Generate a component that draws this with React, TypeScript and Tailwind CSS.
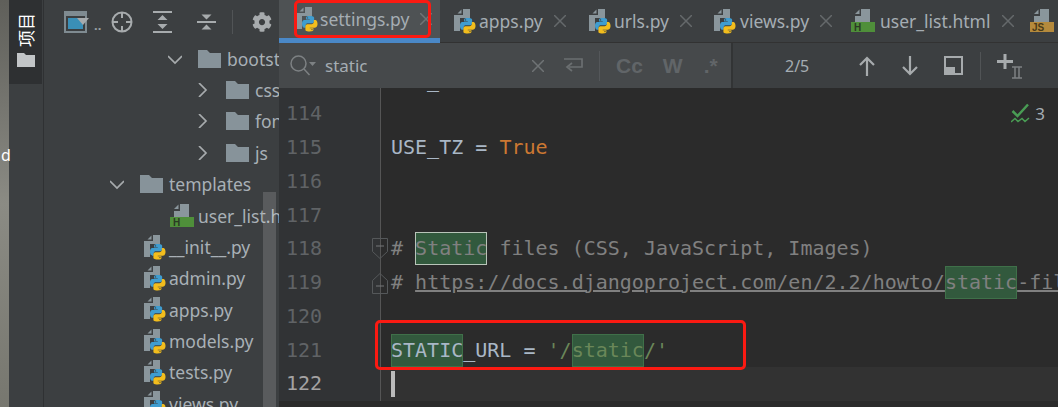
import { FaCog } from "react-icons/fa"

const ui = "font-['Noto_Sans','Open_Sans',sans-serif]"

const logoBlue = "M7.900 0C4 0 4.200 1.700 4.200 1.700v1.800H8V4H2.700S0 3.700 0 7.900 2.400 12 2.400 12h1.400v-2s-.1-2.400 2.400-2.400h4s2.300 0 2.300-2.200V1.900S12.900 0 7.900 0zM5.700 1.300a.7.7 0 110 1.400.7.7 0 010-1.400z"

function PyIcon() {
  return (
    <svg width="23" height="25" viewBox="0 0 23 25" className="shrink-0">
      <path d="M1 6h9V0h7v9H7v13H1z" fill="#8a969c" />
      <path d="M4.500 4.500L8.500.5v4z" fill="#8a969c" />
      <g transform="translate(7 9) scale(.97)">
        <path d={logoBlue} fill="#3f9dd0" />
        <path d={logoBlue} fill="#f2bd1d" transform="rotate(180 8 8)" />
      </g>
    </svg>
  )
}

function HtmlIcon() {
  return (
    <svg width="24" height="24" viewBox="0 0 24 24" className="shrink-0">
      <path d="M10 0h9v13H4V7h6z" fill="#8a969c" />
      <path d="M4 5L8.500.5V5z" fill="#8a969c" />
      <rect x="0" y="13" width="24" height="10" fill="#4f8f3a" />
      <text x="3" y="22" fontSize="10" fill="#2b3a24" fontWeight="700" fontFamily="Liberation Sans">H</text>
    </svg>
  )
}

function JsIcon() {
  return (
    <svg width="24" height="24" viewBox="0 0 24 24" className="shrink-0">
      <path d="M10 0h9v13H4V7h6z" fill="#8a969c" />
      <path d="M4 5L8.500.5V5z" fill="#8a969c" />
      <rect x="0" y="13" width="24" height="10" fill="#b58a3c" />
      <text x="2" y="22" fontSize="10" fill="#4a3a18" fontWeight="700" fontFamily="Liberation Sans">JS</text>
    </svg>
  )
}

function Folder() {
  return (
    <svg width="23" height="18" viewBox="0 0 23 18" className="shrink-0">
      <path d="M0 0h9l3 3h11v15H0z" fill="#87939a" />
    </svg>
  )
}

function Chevron({ open }: { open: boolean }) {
  return (
    <svg width="14" height="14" viewBox="0 0 14 14" className="shrink-0" fill="none" stroke="#a7abad" strokeWidth="1.700">
      {open ? <path d="M0 4l7 7 7-7" /> : <path d="M3 0l7 7-7 7" />}
    </svg>
  )
}

function Cross({ color = "#65696b" }: { color?: string }) {
  return (
    <svg width="12" height="12" viewBox="0 0 12 12" className="shrink-0" fill="none" stroke={color} strokeWidth="1.500">
      <path d="M0 0l12 12M12 0L0 12" />
    </svg>
  )
}

function Tab({ name, icon, width, active, gap }: { name: string; icon: React.ReactNode; width: string; active?: boolean; gap: string }) {
  return (
    <div className={`flex h-full shrink-0 items-center ${width} ${active ? "border-b-[5px] border-[#4a88c7] bg-[#4e5254] pl-[16px]" : "border-b border-[#323232] pl-[13px]"}`}>
      {icon}
      <span className={`text-[17.500px] text-[#a5adb3] ${gap} ${ui}`}>{name}</span>
      <span className="ml-[11px]"><Cross color={active ? "#707476" : "#65696b"} /></span>
    </div>
  )
}

function TreeRow({ pad, chev, icon, name, gap = "ml-[6px]" }: { pad: string; chev?: "open" | "closed"; icon: React.ReactNode; name: string; gap?: string }) {
  return (
    <div className={`flex h-[31.400px] shrink-0 items-center whitespace-nowrap ${pad}`}>
      {chev && <span className="mr-[16px]"><Chevron open={chev === "open"} /></span>}
      {icon}
      <span className={`text-[17.500px] text-[#a8b0b6] ${gap} ${ui}`}>{name}</span>
    </div>
  )
}

function FoldMark({ up }: { up?: boolean }) {
  return (
    <svg width="16" height="22" viewBox="0 0 16 22" className="absolute right-[-8px] top-[6px]" fill="none" stroke="#55585a" strokeWidth="1">
      {up ? <path d="M.5 21.500v-13l7.500-7 7.500 7v13z" /> : <path d="M.5.5v13l7.500 7 7.500-7V.5z" />}
      <path d={up ? "M4 14h8" : "M4 8h8"} stroke="#77797b" />
    </svg>
  )
}

function CodeLine({ no, current, fold, children }: { no: number; current?: boolean; fold?: "up" | "down"; children?: React.ReactNode }) {
  return (
    <div className={`flex h-[33.750px] ${current ? "bg-[#323232]" : ""}`}>
      <div className={`relative h-full w-[102px] shrink-0 border-r border-[#555] pl-[7px] leading-[33.750px] ${current ? "text-[#a4a3a3]" : "text-[#606366]"} bg-[#313335]`}>
        {no}
        {fold && <FoldMark up={fold === "up"} />}
      </div>
      <div className="whitespace-pre pl-[10px] leading-[33.750px] text-[#a9b7c6]">{children}</div>
    </div>
  )
}

function Hit({ children, boxed }: { children: React.ReactNode; boxed?: boolean }) {
  return (
    <span className={`inline-block h-[33px] leading-[33px] ${boxed ? "outline outline-1 -outline-offset-1 outline-[#b9c4b9]" : "outline outline-1 -outline-offset-1 outline-[#3f7049]"} bg-[#32593d]`}>
      {children}
    </span>
  )
}

export default function App() {
  return (
    <div className="relative flex h-[407px] w-[1058px] overflow-hidden bg-[#3c3f41]">
      {/* wallpaper sliver */}
      <div className="w-[9px] shrink-0 bg-gradient-to-b from-[#5f5f5a] via-[#8b8b84] to-[#77776f]" />

      {/* tool window strip */}
      <div className="flex w-[35px] shrink-0 flex-col border-r border-[#2f3133]">
        <div className="flex h-[84px] w-[33px] flex-col items-center bg-[#2e3032] pt-[13px]">
          <span className="rotate-180 text-[17px] leading-[18px] text-white [text-orientation:sideways] [writing-mode:vertical-rl] font-['Noto_Sans_CJK_SC',sans-serif]">项目</span>
          <svg width="18" height="14" viewBox="0 0 18 14" className="mt-[6px]">
            <path d="M0 0h7l2 2h9v12H0z" fill="#c2c5c7" />
          </svg>
        </div>
      </div>

      {/* project panel */}
      <div className="flex w-[235px] shrink-0 flex-col overflow-hidden">
        <div className="flex h-[43px] shrink-0 items-center pl-[20px]">
          <svg width="25" height="22" viewBox="0 0 25 22" className="shrink-0">
            <rect x="1" y="1" width="21" height="20" fill="none" stroke="#7f8b91" strokeWidth="2" />
            <rect x="1" y="1" width="21" height="4" fill="#7f8b91" />
            <rect x="4" y="7" width="15" height="11" fill="#3a8fb7" />
            <path d="M13 7h12l-6 7z" fill="#a7abad" />
          </svg>
          <span className="ml-[5px] mt-[8px] text-[13px] font-bold leading-none text-[#9aa0a3]">..</span>
          <svg width="22" height="22" viewBox="0 0 22 22" className="ml-[10px]" fill="none" stroke="#a7abad" strokeWidth="2">
            <circle cx="11" cy="11" r="9.500" />
            <path d="M11 1v6M11 15v6M1 11h6M15 11h6" />
          </svg>
          <svg width="20" height="22" viewBox="0 0 20 22" className="ml-[20px]" fill="#a7abad">
            <rect x="0" y="0" width="19" height="2" />
            <rect x="0" y="20" width="19" height="2" />
            <path d="M9.500 4l5 5h-10zM9.500 18l5-5h-10z" />
          </svg>
          <svg width="20" height="22" viewBox="0 0 20 22" className="ml-[24px]" fill="#a7abad">
            <rect x="0" y="10" width="19" height="2" />
            <path d="M9.500 8.500l5-5h-10zM9.500 13.500l5 5h-10z" />
          </svg>
          <div className="ml-[15px] h-[24px] w-px bg-[#515456]" />
          <FaCog className="ml-[19px] text-[20px] text-[#a7abad]" />
        </div>
        <TreeRow pad="pl-[124px]" chev="open" icon={<Folder />} name="bootstrap" />
        <TreeRow pad="pl-[152px]" chev="closed" icon={<Folder />} name="css" />
        <TreeRow pad="pl-[152px]" chev="closed" icon={<Folder />} name="fonts" />
        <TreeRow pad="pl-[152px]" chev="closed" icon={<Folder />} name="js" />
        <TreeRow pad="pl-[66px]" chev="open" icon={<Folder />} name="templates" />
        <TreeRow pad="pl-[126px]" icon={<HtmlIcon />} name="user_list.html" gap="ml-[4px]" />
        <TreeRow pad="pl-[99px]" icon={<PyIcon />} name="__init__.py" gap="ml-[3px]" />
        <TreeRow pad="pl-[99px]" icon={<PyIcon />} name="admin.py" gap="ml-[3px]" />
        <TreeRow pad="pl-[99px]" icon={<PyIcon />} name="apps.py" gap="ml-[3px]" />
        <TreeRow pad="pl-[99px]" icon={<PyIcon />} name="models.py" gap="ml-[3px]" />
        <TreeRow pad="pl-[99px]" icon={<PyIcon />} name="tests.py" gap="ml-[3px]" />
        <TreeRow pad="pl-[99px]" icon={<PyIcon />} name="views.py" gap="ml-[3px]" />
      </div>

      {/* editor side */}
      <div className="flex min-w-0 flex-1 flex-col overflow-hidden">
        <div className="flex h-[43px] shrink-0">
          <Tab name="settings.py" icon={<PyIcon />} width="w-[161px]" gap="ml-[2px]" active />
          <Tab name="apps.py" icon={<PyIcon />} width="w-[135px]" gap="ml-[3px]" />
          <Tab name="urls.py" icon={<PyIcon />} width="w-[125px]" gap="ml-[3px]" />
          <Tab name="views.py" icon={<PyIcon />} width="w-[138px]" gap="ml-[4px]" />
          <Tab name="user_list.html" icon={<HtmlIcon />} width="w-[179px]" gap="ml-[5px]" />
          <div className="flex h-full flex-1 items-center border-b border-[#323232] pl-[13px]"><JsIcon /></div>
        </div>

        {/* find bar */}
        <div className="flex h-[45px] shrink-0 items-center">
          <div className="flex h-full w-[454px] shrink-0 items-center border-r-2 border-[#323435] bg-[#46494b] pl-[11px]">
            <svg width="26" height="24" viewBox="0 0 26 24" fill="none" stroke="#7d8183" strokeWidth="1.500">
              <circle cx="8.500" cy="9.500" r="7.500" />
              <path d="M14 15l5.500 6" />
              <path d="M19 8h7l-3.500 4z" fill="#7d8183" stroke="none" />
            </svg>
            <span className={`ml-[9px] w-[207px] text-[17px] text-[#a5adb3] ${ui}`}>static</span>
            <Cross color="#6f7375" />
            <svg width="20" height="18" viewBox="0 0 20 18" className="ml-[20px]" fill="none" stroke="#6b6f71" strokeWidth="1.700">
              <path d="M0 2h18v8H5" />
              <path d="M8 6l-5 4 5 4" />
            </svg>
            <div className="ml-[15px] h-[30px] w-px bg-[#54575a]" />
            <span className="ml-[16px] text-[21px] font-bold text-[#616568] font-['Liberation_Sans',sans-serif]">Cc</span>
            <span className="ml-[20px] text-[21px] font-bold text-[#616568] font-['Liberation_Sans',sans-serif]">W</span>
            <span className="ml-[21px] text-[21px] font-bold text-[#616568] font-['Liberation_Sans',sans-serif]">.*</span>
          </div>
          <span className={`ml-[52px] w-[74px] text-[16px] text-[#a5adb3] ${ui}`}>2/5</span>
          <svg width="16" height="20" viewBox="0 0 16 20" fill="none" stroke="#a7abad" strokeWidth="2.200">
            <path d="M8 20V2M1 9l7-7 7 7" />
          </svg>
          <svg width="16" height="20" viewBox="0 0 16 20" className="ml-[27px]" fill="none" stroke="#a7abad" strokeWidth="2.200">
            <path d="M8 0v18M1 11l7 7 7-7" />
          </svg>
          <svg width="19" height="19" viewBox="0 0 19 19" className="ml-[26px]">
            <rect x="1" y="1" width="17" height="17" fill="none" stroke="#a7abad" strokeWidth="2" />
            <rect x="1" y="11" width="10" height="7" fill="#a7abad" />
          </svg>
          <div className="ml-[17px] h-[28px] w-px bg-[#515456]" />
          <svg width="26" height="26" viewBox="0 0 26 26" className="ml-[16px]" fill="none">
            <path d="M8 1v15M0 8.500h16" stroke="#a7abad" strokeWidth="3" />
            <path d="M15 14h10M15 25h10M18 14v11M22 14v11" stroke="#7d8183" strokeWidth="1.500" />
          </svg>
        </div>

        {/* code */}
        <div className="relative flex-1 overflow-hidden bg-[#2b2b2b] font-['DejaVu_Sans_Mono',monospace] text-[20px]">
          <div className="-mt-[24.500px]">
            <CodeLine no={113}>USE_L10N = True</CodeLine>
            <CodeLine no={114} />
            <CodeLine no={115}>USE_TZ = <span className="text-[#cc7832]">True</span></CodeLine>
            <CodeLine no={116} />
            <CodeLine no={117} />
            <CodeLine no={118} fold="down">
              <span className="text-[#808080]"># <Hit boxed>Static</Hit> files (CSS, JavaScript, Images)</span>
            </CodeLine>
            <CodeLine no={119} fold="up">
              <span className="text-[#808080]"># <span className="underline">https://docs.djangoproject.com/en/2.2/howto/<Hit>static</Hit>-files/</span></span>
            </CodeLine>
            <CodeLine no={120} />
            <CodeLine no={121}>
              <Hit>STATIC</Hit>_URL = <span className="text-[#6a8759]">'/<Hit>static</Hit>/'</span>
            </CodeLine>
            <CodeLine no={122} current>
              <span className="mt-[4px] inline-block h-[26px] w-[4px] bg-[#bbbbbb] align-top" />
            </CodeLine>
          </div>
          {/* inspection status */}
          <div className="absolute right-[13px] top-[13px] flex items-center gap-[5px]">
            <svg width="19" height="21" viewBox="0 0 19 21" fill="none" stroke="#499c54" strokeWidth="2.500">
              <path d="M1.500 8l5 5L17 1.500" />
              <path d="M0 19l4-3.500 3 3 4-3 3 3 4-3.500" strokeWidth="1.500" />
            </svg>
            <span className={`text-[17px] text-[#a5adb3] ${ui}`}>3</span>
          </div>
        </div>
      </div>

      {/* things lying over the window */}
      <span className={`absolute left-[1px] top-[143px] text-[16px] leading-[24px] text-white ${ui}`}>d</span>
      <div className="absolute left-[263px] top-[192px] h-[215px] w-[13px] bg-white/15" />
      <div className="absolute left-[294px] top-0 h-[38px] w-[137px] rounded-[5px] border-[3px] border-[#fb1a12]" />
      <div className="absolute left-[375px] top-[320px] h-[50px] w-[371px] rounded-[5px] border-[3px] border-[#fb1a12]" />
    </div>
  )
}
